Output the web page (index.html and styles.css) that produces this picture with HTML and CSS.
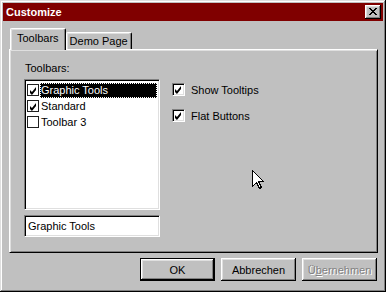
FILE: index.html
```html
<!DOCTYPE html>
<html lang="en">
<head>
  <meta charset="UTF-8">
  <title>Customize</title>
  <link rel="stylesheet" href="styles.css">
</head>
<body>
  <div class="window">
    <div class="titlebar">
      <span class="title">Customize</span>
      <span class="close-btn">
        <svg width="8" height="7" viewBox="0 0 8 7" shape-rendering="crispEdges">
          <path d="M0 0h2v1h-2zM6 0h2v1h-2zM1 1h2v1h-2zM5 1h2v1h-2zM2 2h4v1h-4zM3 3h2v1h-2zM2 4h4v1h-4zM1 5h2v1h-2zM5 5h2v1h-2zM0 6h2v1h-2zM6 6h2v1h-2z" fill="#000"/>
        </svg>
      </span>
    </div>

    <div class="dialog-body">
      <div class="tabs">
        <div class="tab active">Toolbars</div>
        <div class="tab">Demo Page</div>
      </div>

      <div class="tab-panel">
        <div class="left-col">
          <div class="field-label">Toolbars:</div>
          <div class="listbox">
            <div class="list-item selected">
              <span class="list-check checked"></span>
              <span class="item-text">Graphic Tools</span>
            </div>
            <div class="list-item">
              <span class="list-check checked"></span>
              <span class="item-text">Standard</span>
            </div>
            <div class="list-item">
              <span class="list-check"></span>
              <span class="item-text">Toolbar 3</span>
            </div>
          </div>
          <div class="textbox">Graphic Tools</div>
        </div>

        <div class="right-col">
          <div class="check-row">
            <span class="checkbox checked"></span>
            <span>Show Tooltips</span>
          </div>
          <div class="check-row">
            <span class="checkbox checked"></span>
            <span>Flat Buttons</span>
          </div>
        </div>

        <!-- mouse pointer caught in the screenshot -->
        <svg class="cursor" width="12" height="19" viewBox="0 0 12 19" shape-rendering="crispEdges">
          <path d="M0.5 0.5 V16.5 L4.5 12.5 L7.5 18.5 L9.5 17.5 L6.5 11.5 L11.5 11.5 Z" fill="#fff" stroke="#000" stroke-width="1"/>
        </svg>
      </div>

      <div class="buttons">
        <div class="btn default">OK</div>
        <div class="btn">Abbrechen</div>
        <div class="btn disabled">Ü<u>b</u>ernehmen</div>
      </div>
    </div>
  </div>
</body>
</html>
```

FILE: styles.css
```css
body {
  margin: 0;
  background: #c0c0c0;
  font-family: "Liberation Sans", Arial, sans-serif;
  font-size: 11px;
  color: #000;
}
.window {
  width: 386px;
  height: 292px;
  box-sizing: border-box;
  padding: 3px;
  background: #c0c0c0;
  box-shadow: inset -1px -1px #000, inset 1px 1px #dfdfdf, inset -2px -2px #808080, inset 2px 2px #fff;
}
.titlebar {
  height: 18px;
  background: #800000;
  display: flex;
  align-items: center;
  justify-content: space-between;
  padding: 0 2px 0 3px;
}
.title {
  color: #fff;
  font-weight: bold;
  font-size: 11px;
}
.close-btn {
  width: 16px;
  height: 14px;
  box-sizing: border-box;
  background: #c0c0c0;
  display: flex;
  align-items: center;
  justify-content: center;
  box-shadow: inset -1px -1px #000, inset 1px 1px #fff, inset -2px -2px #808080, inset 2px 2px #dfdfdf;
}
.close-btn svg {
  display: block;
  margin-top: -1px;
}
.dialog-body {
  padding: 7px 5px 0 6px;
}
.tabs {
  display: flex;
  align-items: flex-end;
  padding-left: 1px;
}
.tab {
  height: 17px;
  box-sizing: border-box;
  padding: 0 3px;
  display: flex;
  align-items: center;
  border-top: 1px solid #fff;
  border-left: 1px solid #fff;
  border-right: 1px solid #000;
  border-radius: 2px 2px 0 0;
  box-shadow: inset -1px 0 #808080, inset 1px 1px #dfdfdf;
  background: #c0c0c0;
}
.tab.active {
  height: 22px;
  margin-bottom: -1px;
  padding: 0 6px 3px 6px;
  position: relative;
  z-index: 1;
}
.tab-panel {
  position: relative;
  height: 204px;
  box-sizing: border-box;
  border: 1px solid;
  border-color: #fff #000 #000 #fff;
  box-shadow: inset 1px 1px #dfdfdf, inset -1px -1px #808080;
  display: flex;
  gap: 12px;
  padding: 12px 0 0 14px;
}
.field-label {
  height: 13px;
  line-height: 13px;
  margin-left: 1px;
  margin-bottom: 4px;
}
.listbox {
  width: 136px;
  height: 131px;
  box-sizing: border-box;
  background: #fff;
  border: 1px solid;
  border-color: #808080 #fff #fff #808080;
  box-shadow: inset 1px 1px #000, inset -1px -1px #dfdfdf;
  padding: 2px 2px 0 2px;
}
.list-item {
  height: 16px;
  display: flex;
  align-items: center;
}
.list-check {
  width: 12px;
  height: 12px;
  box-sizing: border-box;
  border: 1px solid #202020;
  background: #fff;
  flex-shrink: 0;
  position: relative;
}
.checkbox {
  width: 13px;
  height: 13px;
  box-sizing: border-box;
  background: #fff;
  border: 1px solid;
  border-color: #808080 #fff #fff #808080;
  box-shadow: inset 1px 1px #000, inset -1px -1px #dfdfdf;
  flex-shrink: 0;
  position: relative;
}
.checked::after {
  content: "";
  position: absolute;
  left: 1px;
  top: 1px;
  width: 9px;
  height: 9px;
  background: #000;
  clip-path: polygon(11% 44%, 33% 66%, 78% 11%, 78% 44%, 33% 100%, 11% 78%);
}
.item-text {
  margin-left: 1px;
  padding: 0 2px 0 1px;
  height: 15px;
  line-height: 15px;
  box-sizing: border-box;
  flex: 1;
}
.list-item.selected .item-text {
  background: #000;
  color: #fff;
  outline: 1px dotted #fff;
  outline-offset: -1px;
}
.textbox {
  width: 136px;
  height: 22px;
  box-sizing: border-box;
  margin-top: 5px;
  background: #fff;
  border: 1px solid;
  border-color: #808080 #fff #fff #808080;
  box-shadow: inset 1px 1px #000, inset -1px -1px #dfdfdf;
  padding-left: 3px;
  line-height: 20px;
}
.right-col {
  padding-top: 21px;
  display: flex;
  flex-direction: column;
  gap: 13px;
}
.check-row {
  display: flex;
  align-items: center;
  gap: 6px;
  height: 13px;
}
.cursor {
  position: absolute;
  left: 242px;
  top: 120px;
}
.buttons {
  display: flex;
  justify-content: flex-end;
  gap: 6px;
  margin-top: 5px;
  padding-right: 1px;
}
.btn {
  width: 75px;
  height: 23px;
  box-sizing: border-box;
  display: flex;
  align-items: center;
  justify-content: center;
  box-shadow: inset -1px -1px #000, inset 1px 1px #fff, inset -2px -2px #808080, inset 2px 2px #dfdfdf;
}
.btn.default {
  border: 1px solid #000;
}
.btn.disabled {
  color: #808080;
  text-shadow: 1px 1px #fff;
}
```
